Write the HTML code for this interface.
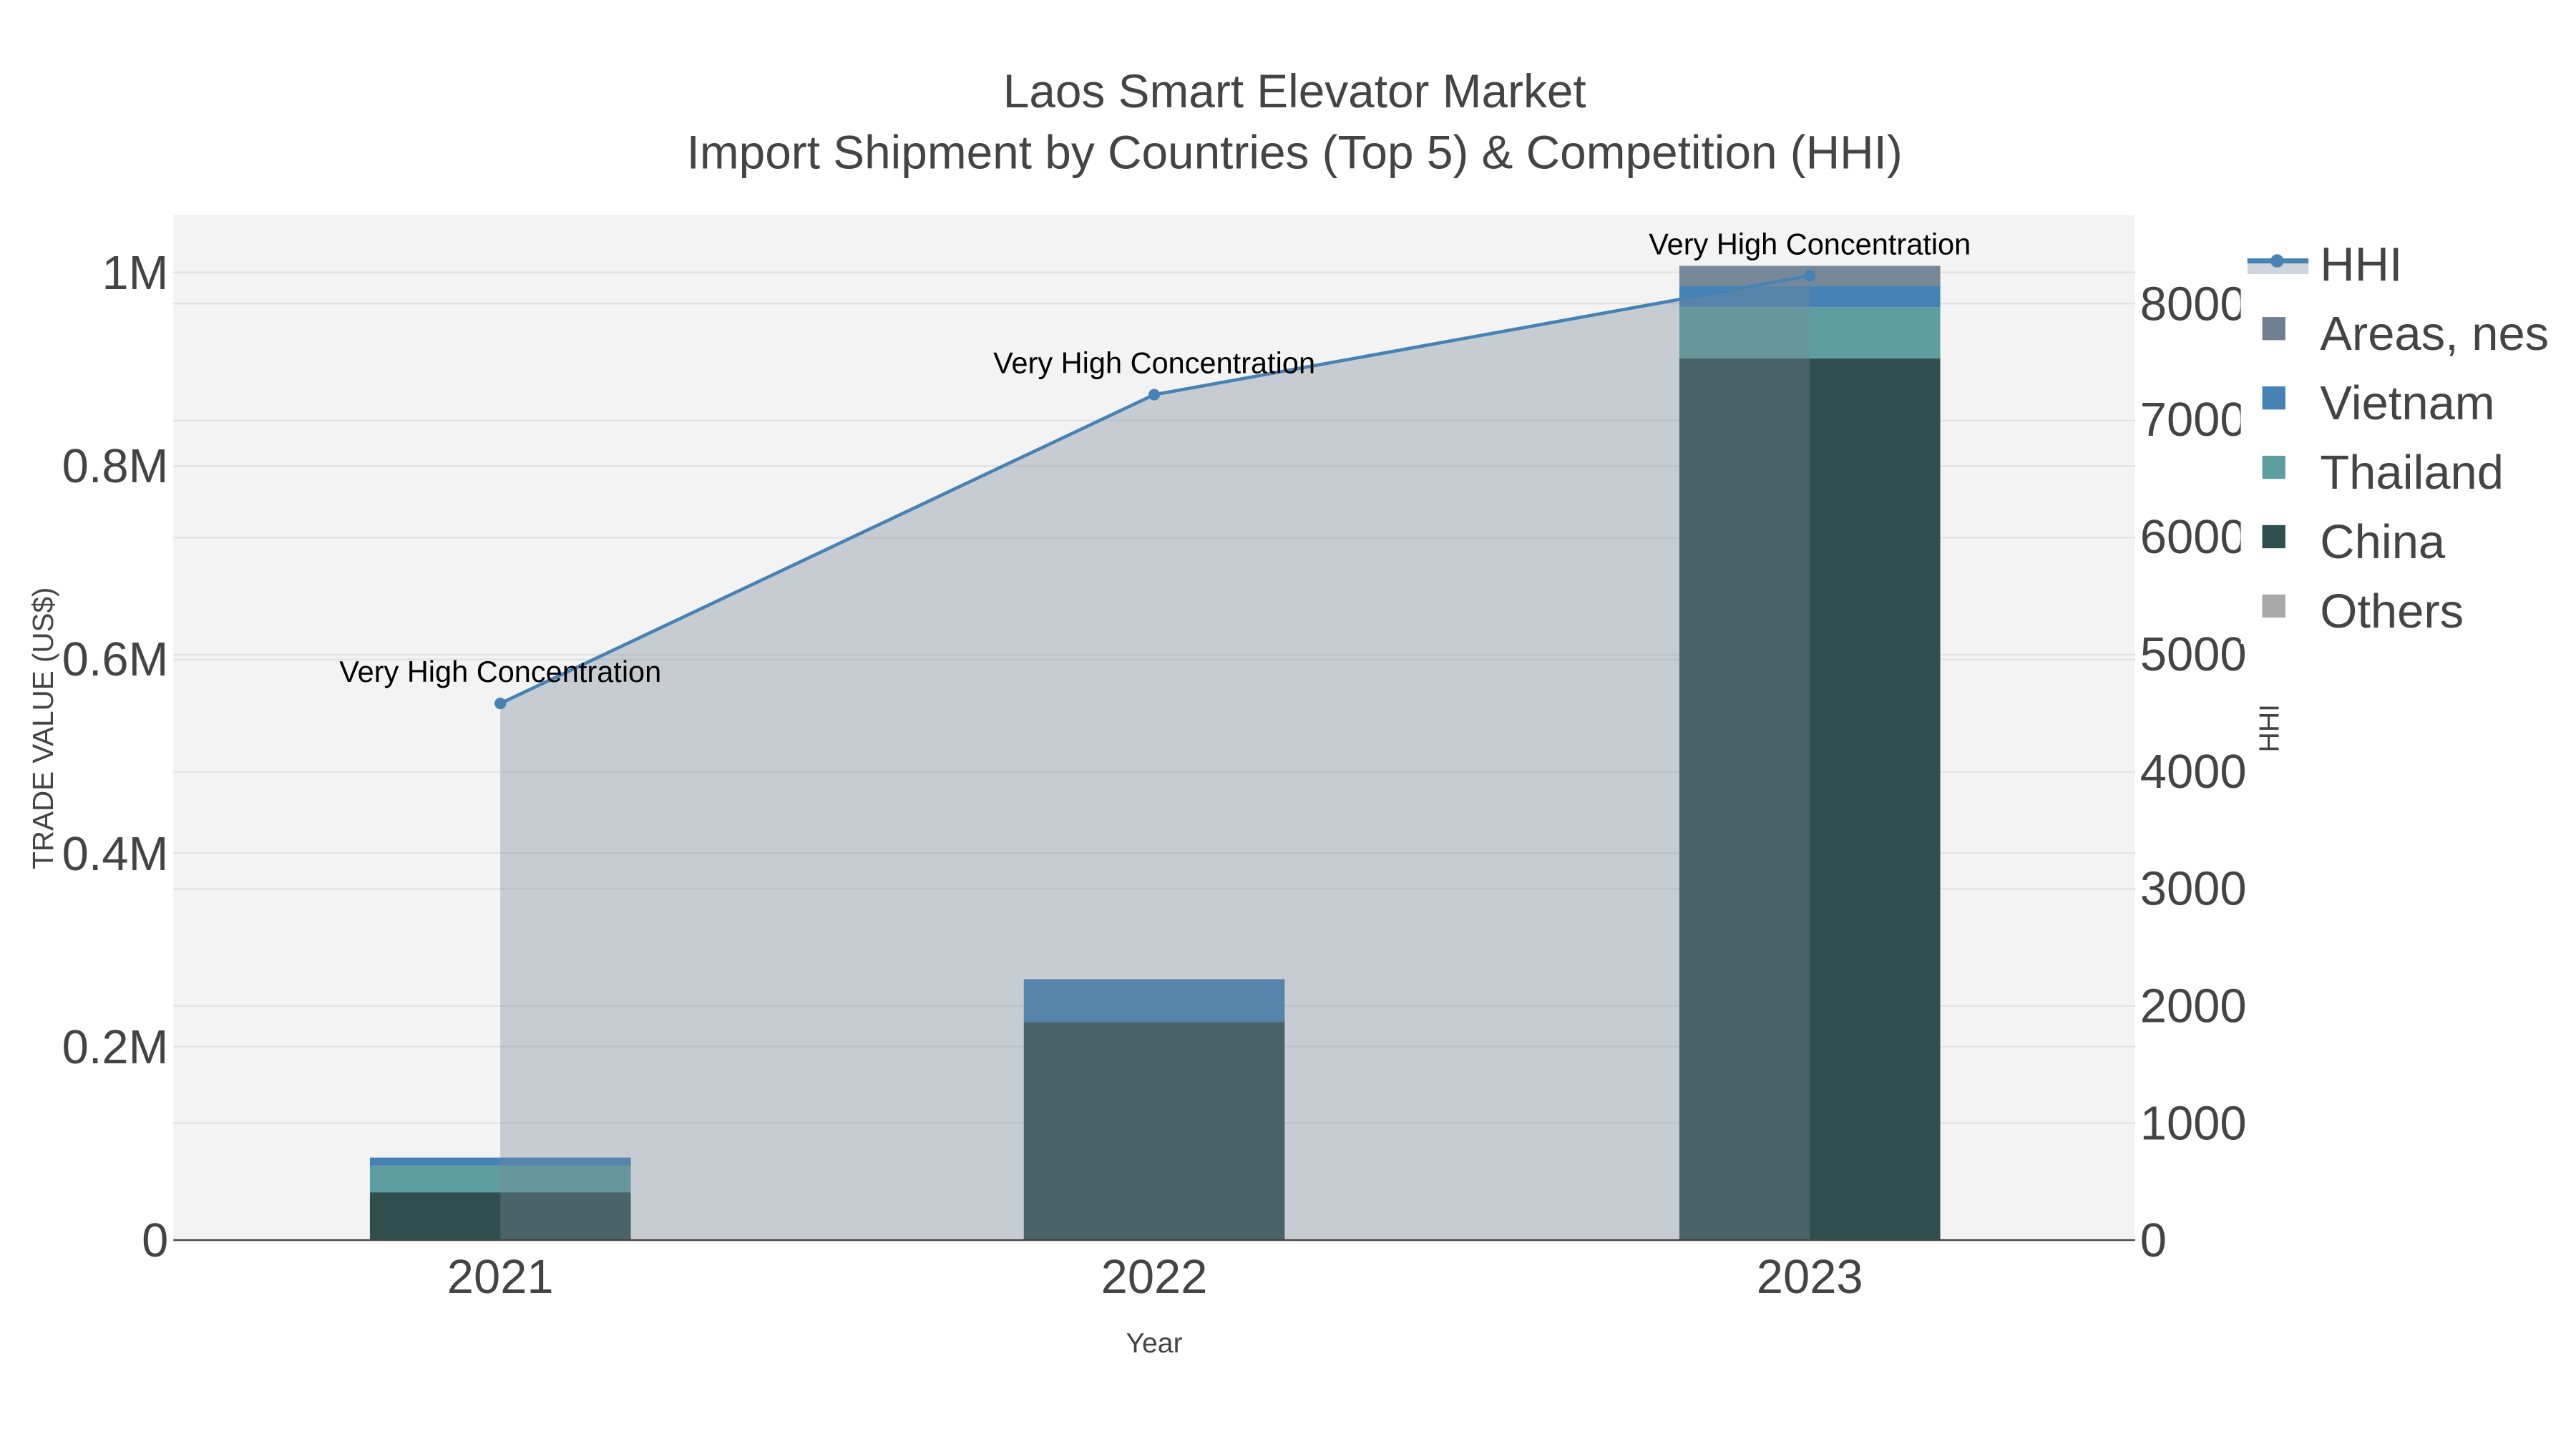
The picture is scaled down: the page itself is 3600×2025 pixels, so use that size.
<!DOCTYPE html>
<html><head><meta charset="utf-8"><style>html,body{margin:0;padding:0;background:#fff}svg{display:block}</style></head>
<body>
<svg width="3600" height="2025" viewBox="0 0 1560 877.5" xmlns="http://www.w3.org/2000/svg" font-family="Liberation Sans, sans-serif">
<rect width="1560" height="877.5" fill="#fff"/>
<rect x="105" y="130" width="1188" height="621" fill="#f3f3f3"/>
<g stroke="#e2e2e2" stroke-width="1">
<line x1="105" x2="1293" y1="633.8" y2="633.8"/><line x1="105" x2="1293" y1="516.6" y2="516.6"/>
<line x1="105" x2="1293" y1="399.4" y2="399.4"/><line x1="105" x2="1293" y1="282.2" y2="282.2"/>
<line x1="105" x2="1293" y1="165" y2="165"/>
<line x1="105" x2="1293" y1="680.1" y2="680.1"/><line x1="105" x2="1293" y1="609.2" y2="609.2"/>
<line x1="105" x2="1293" y1="538.3" y2="538.3"/><line x1="105" x2="1293" y1="467.4" y2="467.4"/>
<line x1="105" x2="1293" y1="396.5" y2="396.5"/><line x1="105" x2="1293" y1="325.6" y2="325.6"/>
<line x1="105" x2="1293" y1="254.7" y2="254.7"/><line x1="105" x2="1293" y1="183.8" y2="183.8"/>
</g>
<rect x="224" y="722" width="158" height="29" fill="#2f4f4f"/>
<rect x="224" y="706" width="158" height="16" fill="#5f9ea0"/>
<rect x="224" y="701" width="158" height="5" fill="#4682b4"/>
<rect x="620" y="619" width="158" height="132" fill="#2f4f4f"/>
<rect x="620" y="593" width="158" height="26" fill="#4682b4"/>
<rect x="1017" y="217" width="158" height="534" fill="#2f4f4f"/>
<rect x="1017" y="186" width="158" height="31" fill="#5f9ea0"/>
<rect x="1017" y="173" width="158" height="13" fill="#4682b4"/>
<rect x="1017" y="161" width="158" height="12" fill="#778899"/>
<polygon points="303,426 699,239 1096,167 1096,751 303,751" fill="rgb(119,136,153)" fill-opacity="0.36"/>
<polyline points="303,426 699,239 1096,167" fill="none" stroke="#4682b4" stroke-width="2"/>
<g fill="#4682b4"><circle cx="303" cy="426" r="3.5"/><circle cx="699" cy="239" r="3.5"/><circle cx="1096" cy="167" r="3.5"/></g>
<line x1="105" x2="1293" y1="751" y2="751" stroke="#444" stroke-width="1"/>
<g font-size="18" fill="#000" text-anchor="middle">
<text x="303" y="413">Very High Concentration</text>
<text x="699" y="226">Very High Concentration</text>
<text x="1096" y="154">Very High Concentration</text>
</g>
<g fill="#444" text-anchor="middle" font-size="28.5">
<text x="784" y="65">Laos Smart Elevator Market</text>
<text x="784" y="102">Import Shipment by Countries (Top 5) &amp; Competition (HHI)</text>
</g>
<g fill="#444" font-size="29" text-anchor="end">
<text x="102" y="761">0</text><text x="102" y="644">0.2M</text><text x="102" y="527">0.4M</text>
<text x="102" y="409">0.6M</text><text x="102" y="292">0.8M</text><text x="102" y="175">1M</text>
</g>
<g fill="#444" font-size="29">
<text x="1296" y="761">0</text><text x="1296" y="690">1000</text><text x="1296" y="619">2000</text>
<text x="1296" y="548">3000</text><text x="1296" y="477">4000</text><text x="1296" y="406">5000</text>
<text x="1296" y="335">6000</text><text x="1296" y="264">7000</text><text x="1296" y="194">8000</text>
</g>
<g fill="#444" font-size="29" text-anchor="middle">
<text x="303" y="783">2021</text><text x="699" y="783">2022</text><text x="1096" y="783">2023</text>
</g>
<text x="699" y="819" font-size="17" fill="#444" text-anchor="middle">Year</text>
<text transform="translate(32,441) rotate(-90)" font-size="17.5" fill="#444" text-anchor="middle">TRADE VALUE (US$)</text>
<text transform="translate(1380,441) rotate(-90)" font-size="17" fill="#444" text-anchor="middle">HHI</text>
<rect x="1357" y="140" width="203" height="250" fill="#fff"/>
<rect x="1361" y="159" width="37" height="7" fill="#d0d5dc"/>
<line x1="1361" x2="1398" y1="158" y2="158" stroke="#4682b4" stroke-width="3"/>
<circle cx="1379" cy="158" r="4" fill="#4682b4"/>
<rect x="1370" y="192" width="14" height="14" fill="#708090"/>
<rect x="1370" y="234" width="14" height="14" fill="#4682b4"/>
<rect x="1370" y="276" width="14" height="14" fill="#5f9ea0"/>
<rect x="1370" y="318" width="14" height="14" fill="#2f4f4f"/>
<rect x="1370" y="360" width="14" height="14" fill="#a9a9a9"/>
<g fill="#444" font-size="29">
<text x="1405" y="170">HHI</text><text x="1405" y="212">Areas, nes</text><text x="1405" y="254">Vietnam</text>
<text x="1405" y="296">Thailand</text><text x="1405" y="338">China</text><text x="1405" y="380">Others</text>
</g>
</svg>
</body></html>
